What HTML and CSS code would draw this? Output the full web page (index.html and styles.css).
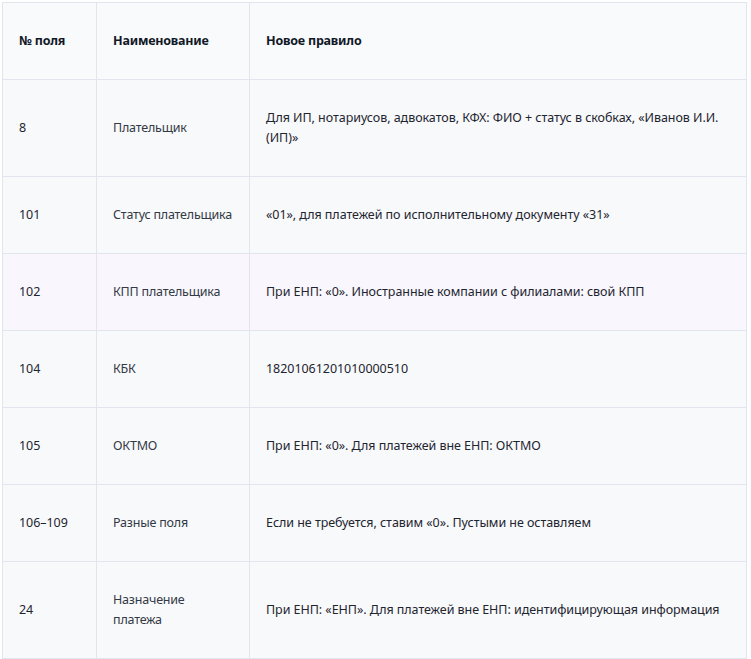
FILE: index.html
```html
<!DOCTYPE html>
<html lang="ru">
<head>
<meta charset="utf-8">
<link rel="stylesheet" href="styles.css">
</head>
<body>
<table class="rules">
  <colgroup>
    <col class="c1"><col class="c2"><col class="c3">
  </colgroup>
  <thead>
    <tr><th>№ поля</th><th>Наименование</th><th>Новое правило</th></tr>
  </thead>
  <tbody>
    <tr><td>8</td><td class="name">Плательщик</td><td>Для ИП, нотариусов, адвокатов, КФХ: ФИО + статус в скобках, «Иванов И.И. (ИП)»</td></tr>
    <tr><td>101</td><td class="name">Статус плательщика</td><td>«01», для платежей по исполнительному документу «31»</td></tr>
    <tr class="hl"><td>102</td><td class="name">КПП плательщика</td><td>При ЕНП: «0». Иностранные компании с филиалами: свой КПП</td></tr>
    <tr><td>104</td><td class="name">КБК</td><td>18201061201010000510</td></tr>
    <tr><td>105</td><td class="name">ОКТМО</td><td>При ЕНП: «0». Для платежей вне ЕНП: ОКТМО</td></tr>
    <tr><td>106–109</td><td class="name">Разные поля</td><td>Если не требуется, ставим «0». Пустыми не оставляем</td></tr>
    <tr><td>24</td><td class="name">Назначение платежа</td><td>При ЕНП: «ЕНП». Для платежей вне ЕНП: идентифицирующая информация</td></tr>
  </tbody>
</table>
</body>
</html>
```

FILE: styles.css
```css
html, body {
  margin: 0;
  background: #ffffff;
}
body {
  padding: 2px 4px 0 2px;
  font-family: "Noto Sans", "Open Sans", sans-serif;
  font-size: 12.5px;
  color: #1e2530;
}
.rules {
  width: 745px;
  border-collapse: collapse;
  table-layout: fixed;
  background: #f8f9fb;
  border: 1px solid #e1e6ee;
}
.c1 { width: 94px; }
.c2 { width: 153px; }
.rules th, .rules td {
  border: 1.5px solid #e1e6ee;
  padding: 28px 15px 28px 16px;
  line-height: 20px;
  text-align: left;
  vertical-align: middle;
  letter-spacing: -0.05px;
}
.rules th {
  font-weight: 700;
  color: #111827;
  background: #f9fafc;
  letter-spacing: -0.2px;
}
.rules td.name {
  color: #333a45;
  letter-spacing: -0.2px;
}
.rules tr.hl td {
  background: #f9f7fd;
}
```
